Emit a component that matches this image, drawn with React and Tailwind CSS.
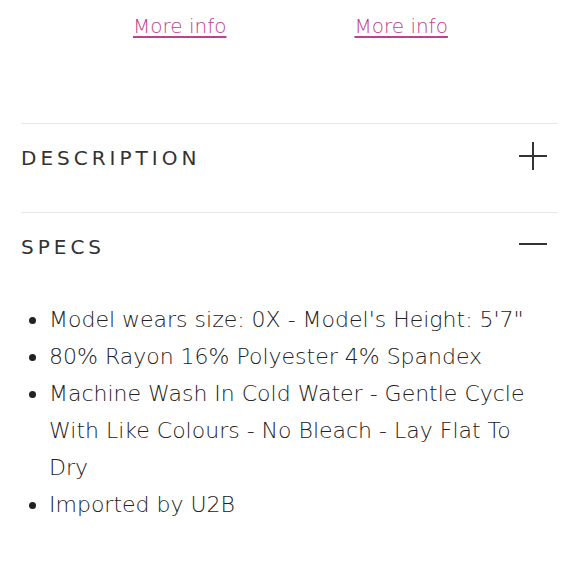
export default function App() {
  const items = [
    "Model wears size: 0X - Model's Height: 5'7\"",
    "80% Rayon 16% Polyester 4% Spandex",
    "Machine Wash In Cold Water - Gentle Cycle With Like Colours - No Bleach - Lay Flat To Dry",
    "Imported by U2B",
  ];
  return (
    <div className="w-[579px] h-[580px] bg-white overflow-hidden text-[#333]" style={{ fontFamily: '"DejaVu Sans", sans-serif' }}>
      <div className="flex pt-[12px] h-[123px]">
        <div className="flex w-[442px] ml-[133px] gap-[128px]">
          <a className="text-[20px] leading-[28px] font-extralight text-[#c0408a] underline underline-offset-[3px]">More info</a>
          <a className="text-[20px] leading-[28px] font-extralight text-[#c0408a] underline underline-offset-[3px]">More info</a>
        </div>
      </div>
      <div className="mx-[21px] border-t border-[#e6e6e6]">
        <div className="flex items-start justify-between h-[88px] pt-[20px]">
          <span className="text-[20px] leading-[28px] tracking-[4px] font-normal">DESCRIPTION</span>
          <svg width="30" height="30" viewBox="0 0 30 30" className="mr-[10px] -mt-[3px]">
            <path d="M15 1V29M1 15H29" stroke="#333" strokeWidth="2" />
          </svg>
        </div>
        <div className="border-t border-[#e6e6e6] flex items-start justify-between h-[66px] pt-[20px]">
          <span className="text-[20px] leading-[28px] tracking-[4px] font-normal">SPECS</span>
          <svg width="30" height="30" viewBox="0 0 30 30" className="mr-[10px] -mt-[4px]">
            <path d="M1 15H29" stroke="#333" strokeWidth="2" />
          </svg>
        </div>
        <ul className="mt-[23px] list-disc pl-[28px] pr-[23px] text-[22px] leading-[37px] font-extralight text-[#222]">
          {items.map((t) => (
            <li key={t}>{t}</li>
          ))}
        </ul>
      </div>
    </div>
  );
}
